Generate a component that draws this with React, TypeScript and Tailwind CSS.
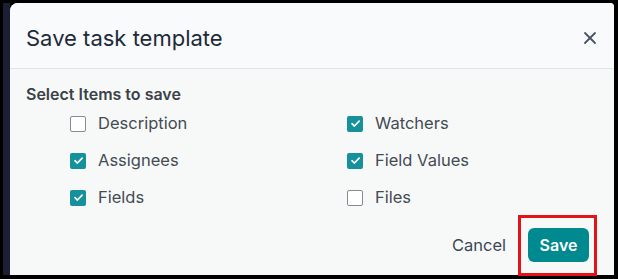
import { X } from 'lucide-react';

type Item = { label: string; checked: boolean };

const left: Item[] = [
  { label: 'Description', checked: false },
  { label: 'Assignees', checked: true },
  { label: 'Fields', checked: true },
];

const right: Item[] = [
  { label: 'Watchers', checked: true },
  { label: 'Field Values', checked: true },
  { label: 'Files', checked: false },
];

function Check({ item }: { item: Item }) {
  return (
    <label className="flex items-center h-[37px] gap-[12px]">
      {item.checked ? (
        <span className="w-[16px] h-[16px] rounded-[2px] bg-[#16909a] flex items-center justify-center">
          <svg width="11" height="11" viewBox="0 0 10 10" fill="none">
            <path d="M1.8 5.2 L4 7.3 L8.3 2.8" stroke="white" strokeWidth="1.5" strokeLinecap="round" strokeLinejoin="round" />
          </svg>
        </span>
      ) : (
        <span className="w-[16px] h-[16px] rounded-[2px] border-[1.5px] border-[#868c94] bg-white" />
      )}
      <span className="text-[16.5px] text-[#454b52]">{item.label}</span>
    </label>
  );
}

export default function App() {
  return (
    <div className="w-[618px] h-[279px] bg-black flex pt-[3px] pl-[3px] pr-[4px] pb-[4px] relative overflow-hidden font-['Inter',sans-serif]">
      <div className="w-[7px] bg-[#1c1f33]" />
      <div className="flex-1 flex flex-col bg-[#f7f9f9] rounded-tl-lg rounded-tr-sm overflow-hidden">
        <header className="h-[66px] flex items-center justify-between pl-[16px] pr-[14px] pt-[4px] bg-[#f9fafb] border-b border-[#e3e6e8]">
          <h2 className="text-[22px] text-[#1d2a3a] font-normal leading-none">Save task template</h2>
          <X className="w-[20px] h-[20px] text-[#4b5563]" strokeWidth={2.2} />
        </header>
        <div className="flex-1 flex flex-col pl-[16px] pr-[25px]">
          <p className="mt-[15px] text-[16px] font-semibold text-[#3c4148] leading-[20px]">Select Items to save</p>
          <div className="grid grid-cols-[277px_1fr] pl-[44px] mt-[1px]">
            <div className="flex flex-col">
              {left.map(i => <Check key={i.label} item={i} />)}
            </div>
            <div className="flex flex-col">
              {right.map(i => <Check key={i.label} item={i} />)}
            </div>
          </div>
          <div className="flex items-center justify-end gap-[22px] mt-[12px]">
            <button className="text-[16.5px] text-[#3a4756]">Cancel</button>
            <button className="w-[61px] h-[34px] rounded-[6px] bg-[#00898f] text-white text-[16px] font-semibold">Save</button>
          </div>
        </div>
      </div>
      {/* annotation box around Save */}
      <div className="absolute left-[518px] top-[215px] w-[79px] h-[61px] border-[3px] border-[#e4121b] pointer-events-none" />
    </div>
  );
}
